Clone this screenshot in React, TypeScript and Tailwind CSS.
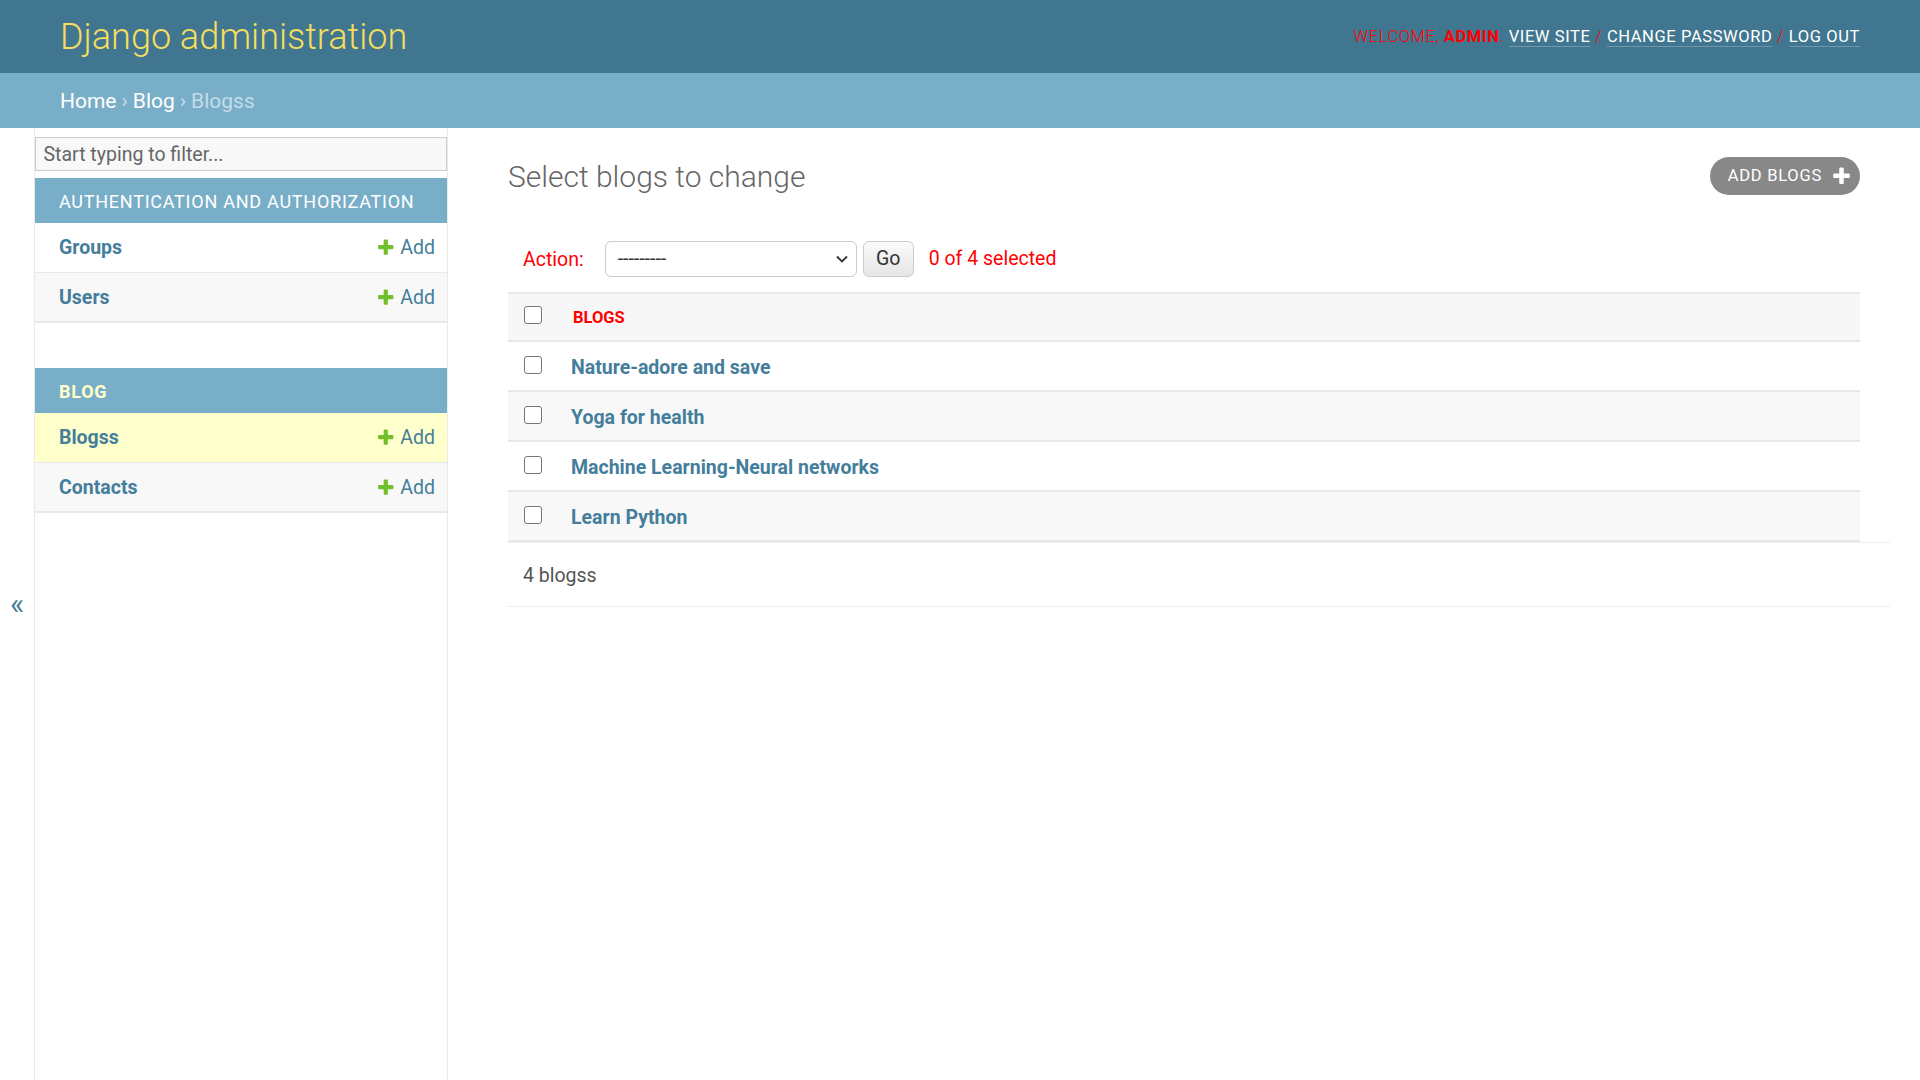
import React from 'react';

const PLUS =
  'M1600 736v192q0 40-28 68t-68 28h-416v416q0 40-28 68t-68 28h-192q-40 0-68-28t-28-68v-416h-416q-40 0-68-28t-28-68v-192q0-40 28-68t68-28h416v-416q0-40 28-68t68-28h192q40 0 68 28t28 68v416h416q40 0 68 28t28 68z';

const PlusIcon: React.FC<{ color: string; size: number }> = ({ color, size }) => (
  <svg width={size} height={size} viewBox="0 0 1792 1792" className="shrink-0">
    <path d={PLUS} fill={color} />
  </svg>
);

const Checkbox: React.FC = () => (
  <span className="block w-[18px] h-[18px] rounded-[3px] border-[1.5px] border-[#767676] bg-white shrink-0" />
);

type SideRow = { name: string; current?: boolean; shaded?: boolean; last?: boolean };

const SideModule: React.FC<{ title: string; current?: boolean; rows: SideRow[] }> = ({ title, current, rows }) => (
  <div className="mb-[45px]">
    <div className="h-[45px] bg-[#79aec8] flex items-center pl-[24px] pt-[1px] text-[18px] tracking-[0.75px] uppercase">
      {current ? (
        <span className="text-[#ffc] font-bold">{title}</span>
      ) : (
        <span className="text-white">{title}</span>
      )}
    </div>
    {rows.map((r) => (
      <div
        key={r.name}
        className={
          'h-[50px] flex items-center justify-between pl-[24px] pr-[12px] pt-[1px] border-[#e8e8e8] ' +
          (r.last ? 'border-b-2 ' : 'border-b ') +
          (r.current ? 'bg-[#ffc]' : r.shaded ? 'bg-[#f8f8f8]' : 'bg-white')
        }
      >
        <span className="text-[19.5px] font-bold text-[#447e9b]">{r.name}</span>
        <span className="flex items-center text-[19.5px] text-[#447e9b]">
          <PlusIcon color="#70bf2b" size={19.5} />
          <span className="ml-[4.5px]">Add</span>
        </span>
      </div>
    ))}
  </div>
);

const blogs = ['Nature-adore and save', 'Yoga for health', 'Machine Learning-Neural networks', 'Learn Python'];

const App: React.FC = () => {
  return (
    <div className="min-h-screen flex flex-col bg-white font-['Roboto','Liberation_Sans',sans-serif] text-[#333]">
      {/* header */}
      <header className="h-[73px] shrink-0 bg-[#417690] flex items-center justify-between px-[60px]">
        <h1 className="text-[36px] font-light text-[#f5dd5d] leading-[42px]">Django administration</h1>
        <div className="pt-[2px] text-[16.5px] uppercase tracking-[0.6px] font-light text-[#ff0000]">
          Welcome, <strong className="font-bold">admin</strong>.{' '}
          <span className="text-white font-normal border-b border-white/25">View site</span> /{' '}
          <span className="text-white font-normal border-b border-white/25">Change password</span> /{' '}
          <span className="text-white font-normal border-b border-white/25">Log out</span>
        </div>
      </header>

      {/* breadcrumbs */}
      <div className="h-[55px] shrink-0 bg-[#79aec8] flex items-center px-[60px] pt-[2px] text-[21px] text-[#c4dce8]">
        <span className="text-white">Home</span>
        <span className="mx-[5px]">›</span>
        <span className="text-white">Blog</span>
        <span className="mx-[5px]">›</span>
        <span>Blogss</span>
      </div>

      <div className="flex-1 flex">
        {/* toggle */}
        <div className="w-[35px] shrink-0 border-r border-[#eaeaea] flex items-center justify-center text-[30px] text-[#447e9b] leading-none">
          «
        </div>

        {/* sidebar */}
        <nav className="w-[413px] shrink-0 border-r border-[#eaeaea] pt-[1px]">
          <input
            placeholder="Start typing to filter..."
            className="block w-full h-[34px] my-[7.5px] px-[7.5px] pt-[2px] bg-[#f8f8f8] border border-[#ccc] text-[19.5px] placeholder:text-[#666] outline-none"
          />
          <SideModule
            title="Authentication and Authorization"
            rows={[{ name: 'Groups' }, { name: 'Users', shaded: true, last: true }]}
          />
          <SideModule
            title="Blog"
            current
            rows={[{ name: 'Blogss', current: true }, { name: 'Contacts', shaded: true, last: true }]}
          />
        </nav>

        {/* content */}
        <main className="flex-1 pt-[29px] pl-[60px] pr-[30px]">
          <div className="mr-[30px] flex items-center justify-between h-[38px] mb-[31px]">
            <h1 className="text-[30px] font-light text-[#666] leading-[36px] pt-[2px]">Select blogs to change</h1>
            <div className="h-[38px] rounded-full bg-[#888] text-white flex items-center pl-[18px] pr-[8px] text-[16.5px] uppercase tracking-[0.75px]">
              Add blogs
              <span className="ml-[9px] flex">
                <PlusIcon color="#ffffff" size={21} />
              </span>
            </div>
          </div>

          <div className="mr-[30px]">
            {/* actions */}
            <div className="h-[66px] px-[15px] flex items-center text-[19.5px] text-[#ff0000]">
              <span className="pt-[1px]">Action:</span>
              <div className="ml-[21px] w-[252px] h-[36px] rounded-[6px] border border-[#ccc] bg-white flex items-center justify-between pl-[12px] pr-[8px] text-[#333] text-[19.5px]">
                <span>---------</span>
                <svg width="12" height="8" viewBox="0 0 12 8">
                  <path d="M1 1.5l5 5 5-5" fill="none" stroke="#333" strokeWidth="1.8" />
                </svg>
              </div>
              <div className="ml-[6px] w-[51px] h-[36px] rounded-[6px] border border-[#ccc] bg-gradient-to-b from-[#fafafa] to-[#e6e6e6] flex items-center justify-center text-[#333]">
                Go
              </div>
              <span className="ml-[15px]">0 of 4 selected</span>
            </div>

            {/* table */}
            <div className="h-[50px] bg-[#f7f7f7] border-y-2 border-[#e8e8e8] flex items-center pl-[16px]">
              <span className="-mt-[4px]">
                <Checkbox />
              </span>
              <span className="ml-[31px] pt-[2px] text-[16.5px] font-bold text-[#ff0000] uppercase">Blogs</span>
            </div>
            {blogs.map((b, i) => (
              <div
                key={b}
                className={
                  'h-[50px] border-b-2 border-[#e8e8e8] flex items-center pl-[16px] ' +
                  (i % 2 === 1 ? 'bg-[#f8f8f8]' : 'bg-white')
                }
              >
                <span className="-mt-[3px]">
                  <Checkbox />
                </span>
                <span className="ml-[29px] pt-[3px] text-[19.5px] font-bold text-[#447e9b]">{b}</span>
              </div>
            ))}
          </div>

          {/* paginator */}
          <div className="h-[65px] border-y border-[#eeeeee] flex items-center px-[15px] pt-[2px] text-[19.5px] text-[#555]">
            4 blogss
          </div>
        </main>
      </div>
    </div>
  );
};

export default App;
